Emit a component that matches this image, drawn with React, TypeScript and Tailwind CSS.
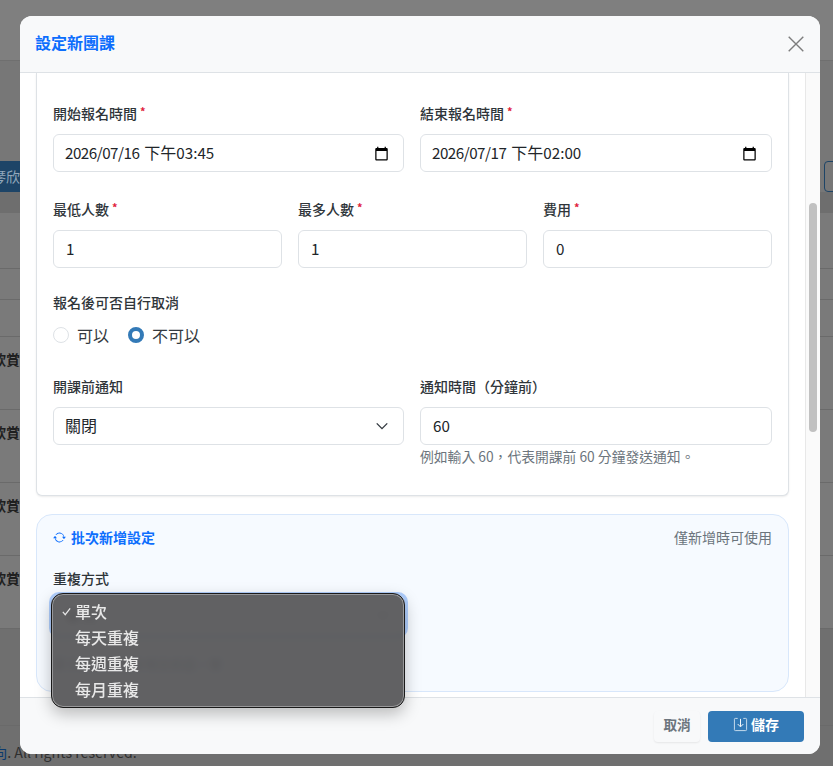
const FONT = "font-['Noto_Sans_CJK_TC','Noto_Sans',sans-serif]"

const Required = () => <span className="relative -top-[2px] ml-[3px] text-[11px] font-bold leading-none text-[#e0213b]">*</span>

function Label({ text, required }: { text: string; required?: boolean }) {
    return (
        <label className="mb-[11px] flex h-[20px] items-center text-[14px] font-medium leading-[20px] text-[#2f353a]">
            {text}
            {required && <Required />}
        </label>
    )
}

const CalendarIcon = () => (
    <svg viewBox="0 0 24 24" className="h-[15px] w-[15px] text-black" fill="currentColor">
        <path d="M20 3h-1V1h-2v2H7V1H5v2H4c-1.1 0-2 .9-2 2v16c0 1.1.9 2 2 2h16c1.1 0 2-.9 2-2V5c0-1.1-.9-2-2-2zm0 18H4V8h16v13z" />
    </svg>
)

function Field({ children, icon }: { children: React.ReactNode; icon?: React.ReactNode }) {
    return (
        <div className="flex h-[38px] items-center justify-between rounded-md border border-[#dee2e6] bg-white pl-3 pr-[14px] text-[15.2px] text-[#212529]">
            <span className="pb-[2px]">{children}</span>
            {icon}
        </div>
    )
}

function DateValue({ date, time }: { date: string; time: string }) {
    return (
        <>
            <span className="ml-[-1px] tracking-[-0.5px]">{date}</span>
            <span className="ml-[5px] text-[16px]">下午</span>
            <span>{time}</span>
        </>
    )
}

function Radio({ label, checked }: { label: string; checked?: boolean }) {
    return (
        <div className="flex items-center gap-2">
            <span
                className={
                    checked
                        ? "h-4 w-4 rounded-full border-[4px] border-[#337ab7] bg-white"
                        : "h-4 w-4 rounded-full border border-[#dee2e6] bg-white"
                }
            />
            <span className="pb-px text-[16px] leading-[24px] text-[#343a40]">{label}</span>
        </div>
    )
}

// the page behind the dialog, dimmed by the overlay
function BackgroundPage() {
    return (
        <div className="absolute inset-0 overflow-hidden bg-[#7a7a7a]">
            <div className="absolute left-0 right-0 top-0 h-[60px] bg-[#7f7f7f]" />
            <div className="absolute left-0 right-0 top-[60px] h-[132px] border-t border-[#6f6f6f] bg-[#777777]" />
            <div className="absolute left-0 top-[161px] flex h-[31px] w-[20px] items-center justify-end overflow-hidden bg-[#1d4467] text-[14px] text-[#93a8bb]">
                <span className="whitespace-nowrap">琴欣</span>
            </div>
            <div className="absolute left-[824px] top-[161px] h-[31px] w-[20px] rounded border border-[#1d4467]" />
            <div className="absolute left-0 right-0 top-[192px] h-[21px] bg-[#6e6e6e]" />
            <div className="absolute left-0 right-0 top-[629px] h-[137px] bg-[#6f6f6f]" />
            {[268, 299, 336, 409, 482, 555, 628, 725].map((y) => (
                <div key={y} className="absolute left-0 right-0 h-px bg-[#6a6a6a]" style={{ top: y }} />
            ))}
            {[349, 422, 495, 568].map((y) => (
                <div key={y} className="absolute left-[-8px] whitespace-nowrap text-[14px] font-bold leading-[20px] text-[#1f1f1f]" style={{ top: y }}>
                    欣賞
                </div>
            ))}
            <div className="absolute left-0 top-[742px] whitespace-nowrap text-[14.2px] leading-[20px] text-[#2f2f2f]">
                <span className="ml-[-7px] text-[#0b3a6e]">向</span>. All rights reserved.
            </div>
        </div>
    )
}

function RepeatMenu() {
    return (
        <div className="absolute left-[51px] top-[593px] z-20 h-[115px] w-[354px] rounded-xl border border-[#1a1a1a] bg-[#58595b]/95 shadow-[inset_0_0_0_1px_rgba(255,255,255,0.35),0_6px_16px_rgba(0,0,0,0.25)] backdrop-blur-[3px]">
            <ul className="flex flex-col pt-[4px] text-[16px] font-medium leading-[26px] text-[#e8e8e8]">
                <li className="flex items-center pl-[9px]">
                    <svg viewBox="0 0 12 12" className="mr-[3px] h-[11px] w-[11px]" fill="none" stroke="currentColor" strokeWidth="1.3">
                        <path d="M2 6.5 4.6 9.5 10 2.5" />
                    </svg>
                    單次
                </li>
                <li className="pl-[23px]">每天重複</li>
                <li className="pl-[23px]">每週重複</li>
                <li className="pl-[23px]">每月重複</li>
            </ul>
        </div>
    )
}

export default function App() {
    return (
        <div className={`relative h-[766px] w-[833px] overflow-hidden ${FONT}`}>
            <BackgroundPage />

            <div className="absolute left-[20px] top-[16px] flex h-[738px] w-[800px] flex-col overflow-hidden rounded-xl bg-white">
                <header className="flex h-[57px] shrink-0 items-center justify-between border-b border-[#dee2e6] bg-[#f8f9fa] pl-[15px] pr-4">
                    <h2 className="mb-1 text-[16px] font-bold text-[#0d6efd]">設定新團課</h2>
                    <svg viewBox="0 0 16 16" className="h-4 w-4 text-[#7d7d7d]" fill="none" stroke="currentColor" strokeWidth="1.4">
                        <path d="M.7.7l14.6 14.6M15.3.7.7 15.3" />
                    </svg>
                </header>

                <div className="flex min-h-0 flex-1">
                    <div className="flex min-w-0 flex-1 flex-col gap-[18px] overflow-hidden px-4">
                        <section className="flex h-[423px] shrink-0 flex-col rounded-b-md border border-t-0 border-[#dee2e6] bg-white px-4 pt-[30px] shadow-[0_1px_2px_rgba(0,0,0,0.08)]">
                            <div className="grid grid-cols-[351px_1fr] gap-x-4">
                                <div>
                                    <Label text="開始報名時間" required />
                                    <Field icon={<CalendarIcon />}><DateValue date="2026/07/16" time="03:45" /></Field>
                                </div>
                                <div>
                                    <Label text="結束報名時間" required />
                                    <Field icon={<CalendarIcon />}><DateValue date="2026/07/17" time="02:00" /></Field>
                                </div>
                            </div>

                            <div className="mt-[27px] grid grid-cols-3 gap-x-4">
                                <div>
                                    <Label text="最低人數" required />
                                    <Field>1</Field>
                                </div>
                                <div>
                                    <Label text="最多人數" required />
                                    <Field>1</Field>
                                </div>
                                <div>
                                    <Label text="費用" required />
                                    <Field>0</Field>
                                </div>
                            </div>

                            <div className="mt-[24px]">
                                <label className="flex h-[20px] items-center text-[14px] font-medium text-[#2f353a]">報名後可否自行取消</label>
                                <div className="mt-[11px] flex h-[24px] items-center gap-[19px]">
                                    <Radio label="可以" />
                                    <Radio label="不可以" checked />
                                </div>
                            </div>

                            <div className="mt-[29px] grid grid-cols-[351px_1fr] gap-x-4">
                                <div>
                                    <Label text="開課前通知" />
                                    <Field
                                        icon={
                                            <svg viewBox="0 0 16 16" className="h-[14px] w-[14px] text-[#343a40]" fill="none" stroke="currentColor" strokeWidth="1.6">
                                                <path d="m2 5 6 6 6-6" />
                                            </svg>
                                        }
                                    >
                                        <span className="ml-[-1px] text-[16px]">關閉</span>
                                    </Field>
                                </div>
                                <div>
                                    <Label text="通知時間（分鐘前）" />
                                    <Field>60</Field>
                                    <p className="mt-[2px] text-[13.8px] leading-[19px] text-[#6c757d]">
                                        例如輸入 60，代表開課前 60 分鐘發送通知。
                                    </p>
                                </div>
                            </div>
                        </section>

                        <section className="h-[178px] shrink-0 rounded-2xl border border-[#d8e7fb] bg-[#f6faff] px-4 pt-[12px]">
                            <div className="flex items-center justify-between">
                                <div className="flex items-center gap-[5px] text-[14px] font-bold leading-[20px] text-[#0d6efd]">
                                    <svg viewBox="0 0 16 16" className="h-[13px] w-[13px]" fill="currentColor">
                                        <path d="M11.534 7h3.932a.25.25 0 0 1 .192.41l-1.966 2.36a.25.25 0 0 1-.384 0l-1.966-2.36a.25.25 0 0 1 .192-.41zm-11 2h3.932a.25.25 0 0 0 .192-.41L2.692 6.23a.25.25 0 0 0-.384 0L.342 8.59A.25.25 0 0 0 .534 9z" />
                                        <path fillRule="evenodd" d="M8 3c-1.552 0-2.94.707-3.857 1.818a.5.5 0 1 1-.771-.636A6.002 6.002 0 0 1 13.917 7H12.9A5.002 5.002 0 0 0 8 3zM3.1 9a5.002 5.002 0 0 0 8.757 2.182.5.5 0 1 1 .771.636A6.002 6.002 0 0 1 2.083 9H3.1z" />
                                    </svg>
                                    批次新增設定
                                </div>
                                <span className="text-[14px] leading-[20px] text-[#6c757d]">僅新增時可使用</span>
                            </div>
                            <div className="mt-[21px] w-[351px]">
                                <label className="flex h-[20px] items-center text-[14px] font-medium text-[#2f353a]">重複方式</label>
                                <div className="mt-[8px] flex h-[38px] items-center justify-between rounded-md bg-white pl-3 pr-[14px] text-[16px] text-[#212529] shadow-[0_0_0_4px_rgba(13,110,253,0.3)]">
                                    <span>單次</span>
                                    <svg viewBox="0 0 16 16" className="h-[14px] w-[14px] text-[#343a40]" fill="none" stroke="currentColor" strokeWidth="1.6">
                                        <path d="m2 5 6 6 6-6" />
                                    </svg>
                                </div>
                                <p className="mt-[20px] text-[13px] leading-[19px] text-[#6c757d]">單次模式僅會新增目前這一筆</p>
                            </div>
                        </section>
                    </div>

                    <div className="relative w-[15px] shrink-0 border-l border-[#e8e8e8] bg-[#fafafa]">
                        <div className="absolute left-[3px] top-[130px] h-[229px] w-2 rounded-full bg-[#c1c1c1]" />
                    </div>
                </div>

                <footer className="flex h-[57px] shrink-0 items-center justify-end gap-2 border-t border-[#dee2e6] bg-[#f8f9fa] pr-4">
                    <button className="h-[31px] w-[46px] rounded bg-[#f8f9fa] pb-1 text-[13.6px] font-semibold text-[#6c757d] shadow-[0_1px_2px_rgba(0,0,0,0.08)]">
                        取消
                    </button>
                    <button className="flex h-[31px] w-[96px] items-center justify-center gap-[3px] rounded bg-[#337ab7] text-[14px] font-bold text-white">
                        <svg viewBox="0 0 16 16" className="-mt-[3px] h-[15px] w-[15px]" fill="none" stroke="#cfe0f0" strokeWidth="1">
                            <path d="M5 1.5H2.5a1 1 0 0 0-1 1v11a1 1 0 0 0 1 1h11a1 1 0 0 0 1-1v-11a1 1 0 0 0-1-1H11" />
                            <path d="M8 2v8M5 7.5 8 10.5l3-3" stroke="#fff" />
                        </svg>
                        <span className="pb-[3px]">儲存</span>
                    </button>
                </footer>
            </div>

            <RepeatMenu />
        </div>
    )
}
